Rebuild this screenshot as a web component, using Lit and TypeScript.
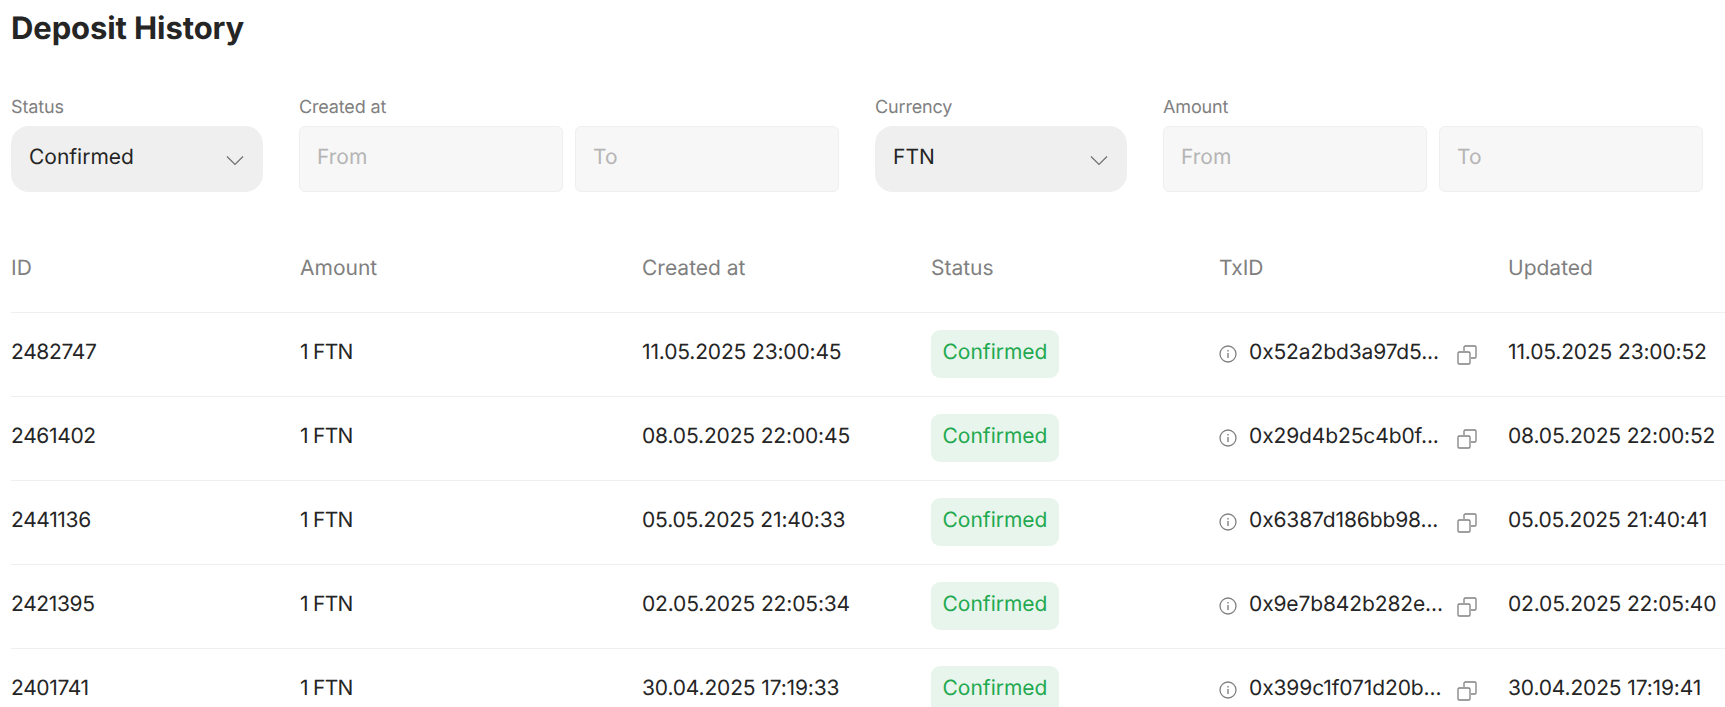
import { LitElement, html, css, svg } from "lit";
import { customElement } from "lit/decorators.js";

const rows = [
  ["2482747", "1 FTN", "11.05.2025 23:00:45", "0x52a2bd3a97d5...", "11.05.2025 23:00:52"],
  ["2461402", "1 FTN", "08.05.2025 22:00:45", "0x29d4b25c4b0f...", "08.05.2025 22:00:52"],
  ["2441136", "1 FTN", "05.05.2025 21:40:33", "0x6387d186bb98...", "05.05.2025 21:40:41"],
  ["2421395", "1 FTN", "02.05.2025 22:05:34", "0x9e7b842b282e...", "02.05.2025 22:05:40"],
  ["2401741", "1 FTN", "30.04.2025 17:19:33", "0x399c1f071d20b...", "30.04.2025 17:19:41"],
];

const chevron = svg`<svg class="chev" width="20" height="12" viewBox="0 0 20 12" fill="none"><path d="M2 2.5l8 8 8-8" stroke="#6f6f6f" stroke-width="1.2"/></svg>`;
const info = svg`<svg class="info" width="18" height="18" viewBox="0 0 18 18" fill="none"><circle cx="9" cy="9" r="8" stroke="#808080" stroke-width="1.3"/><path d="M9 8v5" stroke="#808080" stroke-width="1.4"/><path d="M9 5v1.5" stroke="#808080" stroke-width="1.4"/></svg>`;
const copy = svg`<svg class="copy" width="20" height="20" viewBox="0 0 20 20" fill="none"><path d="M7 6V2.2C7 1.5 7.5 1 8.2 1h9.6c.7 0 1.2.5 1.2 1.2v9.6c0 .7-.5 1.2-1.2 1.2H14" stroke="#808080" stroke-width="1.3"/><rect x="1" y="7" width="12" height="12" rx="1.2" stroke="#808080" stroke-width="1.3"/></svg>`;

@customElement("app-root")
export class AppRoot extends LitElement {
  static styles = css`
    :host {
      display: block;
      height: 707px;
      overflow: hidden;
      background: #fff;
      color: #252525;
      font-family: Inter, "Liberation Sans", sans-serif;
      font-size: 21px;
      text-rendering: geometricPrecision;
    }
    h1 {
      margin: 0;
      padding: 11px 0 0 11px;
      font-size: 31px;
      line-height: 36px;
      font-weight: 700;
      letter-spacing: -0.1px;
    }
    .filters {
      display: grid;
      grid-template-columns: 252px 540px 252px 540px;
      column-gap: 36px;
      padding: 49px 0 0 11px;
    }
    .field label {
      display: block;
      height: 24px;
      line-height: 24px;
      font-size: 18px;
      letter-spacing: -0.15px;
      color: #808080;
      margin-bottom: 6px;
    }
    .select {
      height: 66px;
      border-radius: 18px;
      background: #efefef;
      display: flex;
      align-items: center;
      justify-content: space-between;
      padding: 0 18px;
      box-sizing: border-box;
    }
    .select span { padding-bottom: 4px; }
    .chev { margin-top: 1px; }
    .range {
      display: grid;
      grid-template-columns: 1fr 1fr;
      gap: 12px;
    }
    .input {
      height: 66px;
      box-sizing: border-box;
      border: 1px solid #efefef;
      border-radius: 6px;
      background: #f7f7f7;
      color: #b5b5b5;
      padding: 0 17px 4px;
      display: flex;
      align-items: center;
    }
    .row {
      display: grid;
      grid-template-columns: 289px 342px 289px 288px 289px 1fr;
      margin-left: 11px;
      align-items: center;
      height: 84px;
      box-sizing: border-box;
      border-bottom: 1px solid #efefef;
      white-space: nowrap;
    }
    .row.head {
      margin-top: 30px;
      height: 91px;
      padding-top: 2px;
      color: #808080;
    }
    .cell { padding-bottom: 4px; }
    .id { letter-spacing: -0.35px; }
    .amt { letter-spacing: -0.7px; }
    .date { letter-spacing: -0.15px; }
    .badge {
      display: inline-flex;
      align-items: center;
      justify-content: center;
      width: 128px;
      height: 48px;
      border-radius: 9px;
      background: #e8f5ed;
      color: #22a94f;
      box-sizing: border-box;
      padding-bottom: 3px;
      margin-bottom: 1px;
    }
    .status { display: flex; align-items: center; }
    .tx {
      display: flex;
      align-items: center;
    }
    .info { margin: 0 12px 1px 0; flex: none; }
    .hash { width: 208px; flex: none; letter-spacing: -0.12px; padding-bottom: 4px; }
    .copy { flex: none; }
  `;

  render() {
    return html`
      <h1>Deposit History</h1>
      <div class="filters">
        <div class="field"><label>Status</label><div class="select"><span>Confirmed</span>${chevron}</div></div>
        <div class="field"><label>Created at</label><div class="range"><div class="input">From</div><div class="input">To</div></div></div>
        <div class="field"><label>Currency</label><div class="select"><span>FTN</span>${chevron}</div></div>
        <div class="field"><label>Amount</label><div class="range"><div class="input">From</div><div class="input">To</div></div></div>
      </div>
      <div class="row head">
        <div>ID</div><div>Amount</div><div>Created at</div><div>Status</div><div>TxID</div><div>Updated</div>
      </div>
      ${rows.map(
        (r) => html`<div class="row">
          <div class="cell id">${r[0]}</div>
          <div class="cell amt">${r[1]}</div>
          <div class="cell date">${r[2]}</div>
          <div class="status"><span class="badge">Confirmed</span></div>
          <div class="tx">${info}<span class="hash">${r[3]}</span>${copy}</div>
          <div class="cell date">${r[4]}</div>
        </div>`
      )}
    `;
  }
}
